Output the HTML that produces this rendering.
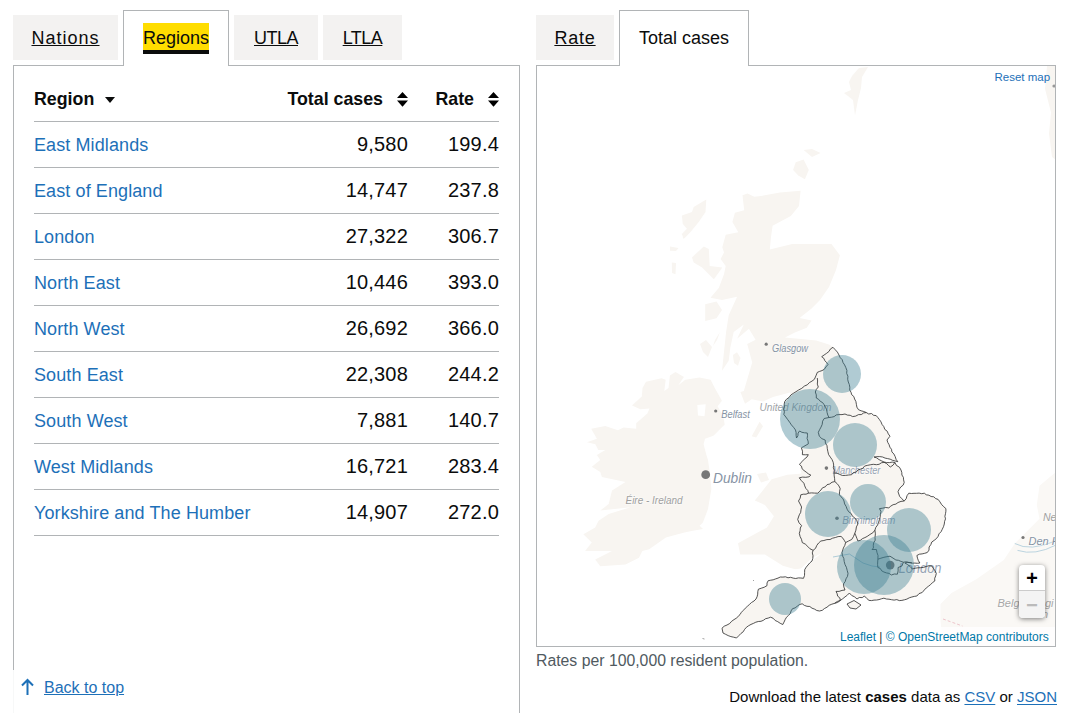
<!DOCTYPE html>
<html><head><meta charset="utf-8">
<style>
*{box-sizing:border-box;margin:0;padding:0}
html,body{width:1068px;height:713px;overflow:hidden;background:#fff;font-family:"Liberation Sans",sans-serif;color:#0b0c0c;position:relative}
.abs{position:absolute}
.tab{position:absolute;top:15px;height:45px;background:#f3f2f1;font-size:18px;line-height:25px;padding-top:11px;text-align:center}
.tab a{color:#0b0c0c;text-decoration:underline;text-underline-offset:1px;text-decoration-thickness:1px}
.tabsel{position:absolute;top:10px;height:56px;background:#fff;border:1px solid #b1b4b6;border-bottom:0;font-size:18px;line-height:25px;padding-top:14px;text-align:center;z-index:2}
.sb{display:inline-block;width:11px;height:15px;margin-left:14px;vertical-align:-2px}
.panel{position:absolute;border:1px solid #b1b4b6;background:#fff}
.hl{display:inline-block;height:25px;padding-top:1px;vertical-align:top;background:#ffdd00;box-shadow:0 -2px #ffdd00,0 4px #0b0c0c;text-decoration:none;color:#0b0c0c}
table{border-collapse:collapse;position:absolute;left:34px;top:76px;width:465px}
th,td{height:46px;border-bottom:1px solid #b1b4b6;padding:0;vertical-align:top}
th{white-space:nowrap;font-weight:bold;font-size:17.8px;line-height:25px;padding-top:11px;text-align:left;height:45px}
td{font-size:18px;line-height:25px;padding-top:11px}
td.n{text-align:right;font-size:20px;letter-spacing:0.2px;padding-top:10px}
td a{color:#1d70b8;text-decoration:none;letter-spacing:0.1px}
</style></head><body>

<!-- LEFT TABS -->
<div class="tab" style="left:13px;width:105px"><a style="letter-spacing:1px">Nations</a></div>
<div class="tabsel" style="left:123px;width:106px"><span class="hl">Regions</span></div>
<div class="tab" style="left:234px;width:84px"><a style="letter-spacing:-0.5px">UTLA</a></div>
<div class="tab" style="left:323px;width:79px"><a style="letter-spacing:-0.5px">LTLA</a></div>
<div class="panel" style="left:13px;top:65px;width:507px;height:660px"></div>

<table>
<tr><th style="width:254px">Region <span style="display:inline-block;margin-left:6px;width:0;height:0;border-left:5px solid transparent;border-right:5px solid transparent;border-top:6px solid #0b0c0c;vertical-align:2px"></span></th>
<th style="text-align:right;width:140px;padding-right:20px">Total cases<svg class="sb" viewBox="0 0 11 15"><path d="M0 6L5.5 0L11 6ZM0 8.5L11 8.5L5.5 14.8Z"/></svg></th>
<th style="text-align:right;width:71px">Rate<svg class="sb" viewBox="0 0 11 15"><path d="M0 6L5.5 0L11 6ZM0 8.5L11 8.5L5.5 14.8Z"/></svg></th></tr>
<tr><td><a>East Midlands</a></td><td class="n" style="padding-right:20px">9,580</td><td class="n">199.4</td></tr>
<tr><td><a>East of England</a></td><td class="n" style="padding-right:20px">14,747</td><td class="n">237.8</td></tr>
<tr><td><a>London</a></td><td class="n" style="padding-right:20px">27,322</td><td class="n">306.7</td></tr>
<tr><td><a>North East</a></td><td class="n" style="padding-right:20px">10,446</td><td class="n">393.0</td></tr>
<tr><td><a>North West</a></td><td class="n" style="padding-right:20px">26,692</td><td class="n">366.0</td></tr>
<tr><td><a>South East</a></td><td class="n" style="padding-right:20px">22,308</td><td class="n">244.2</td></tr>
<tr><td><a>South West</a></td><td class="n" style="padding-right:20px">7,881</td><td class="n">140.7</td></tr>
<tr><td><a>West Midlands</a></td><td class="n" style="padding-right:20px">16,721</td><td class="n">283.4</td></tr>
<tr><td><a>Yorkshire and The Humber</a></td><td class="n" style="padding-right:20px">14,907</td><td class="n">272.0</td></tr>
</table>

<!-- back to top -->
<div class="abs" style="left:0;top:670px;width:200px;height:43px;background:rgba(255,255,255,0.9)"></div>
<svg class="abs" style="left:20px;top:678px" width="15" height="18" viewBox="0 0 15 18"><path d="M7.5 17V2M2 7.5L7.5 2L13 7.5" fill="none" stroke="#1d70b8" stroke-width="2"/></svg>
<div class="abs" style="left:44px;top:678px;font-size:16px;line-height:20px"><a style="color:#1d70b8;text-decoration:underline;text-underline-offset:1px">Back to top</a></div>

<!-- RIGHT TABS -->
<div class="tab" style="left:536px;width:78px"><a style="letter-spacing:0.8px">Rate</a></div>
<div class="tabsel" style="left:619px;width:130px"><span style="position:relative;top:1px">Total cases</span></div>
<div class="panel" style="left:536px;top:65px;width:520px;height:582px;overflow:hidden" id="map">
</div>
<svg class="abs" style="left:537px;top:66px" width="518" height="580" viewBox="537 66 518 580">
<g fill="#f8f5f1">
<path d="M742.5 195.2 L747.5 193.5 L754.3 196.8 L761.0 196.0 L780.0 192.6 L800.6 190.7 L799.0 206.0 L790.8 216.0 L772.6 225.7 L771.0 237.0 L769.8 249.6 L792.2 244.0 L831.5 244.0 L839.9 255.2 L836.0 270.0 L829.0 287.0 L820.0 300.0 L811.6 308.6 L799.6 318.0 L811.6 320.4 L806.8 327.8 L794.9 332.6 L785.0 337.4 L801.0 338.9 L816.2 340.6 L829.6 344.8 L833.0 347.3 L839.0 355.0 L845.8 367.5 L847.7 379.3 L849.7 390.0 L854.6 399.0 L858.5 409.7 L866.4 412.6 L876.2 415.6 L882.0 424.4 L890.0 436.2 L887.0 440.0 L891.9 451.9 L897.8 461.7 L882.6 457.0 L874.0 457.0 L884.0 462.0 L894.9 462.5 L901.0 470.0 L904.2 482.4 L898.0 491.7 L899.6 496.3 L904.2 501.0 L908.8 493.2 L924.3 493.2 L938.1 499.4 L945.9 508.6 L944.3 524.0 L938.1 536.4 L931.8 542.0 L927.3 552.5 L916.9 555.5 L919.9 563.0 L904.9 563.0 L912.4 569.0 L931.8 566.0 L936.3 573.4 L934.8 581.0 L924.3 590.0 L916.9 596.0 L901.9 600.4 L883.9 598.2 L869.0 600.4 L864.4 596.0 L857.0 599.0 L849.4 593.0 L840.4 600.4 L834.5 603.4 L819.5 611.0 L802.2 603.8 L792.5 608.7 L782.8 624.5 L770.6 617.2 L748.7 625.7 L739.0 635.5 L736.5 638.0 L723.0 633.0 L722.0 628.2 L734.0 619.6 L741.4 612.3 L756.0 599.0 L758.4 589.2 L767.0 585.6 L768.2 580.7 L780.3 577.0 L803.5 578.3 L804.7 569.7 L812.0 561.0 L798.5 570.2 L782.8 565.7 L764.9 554.5 L740.2 554.5 L738.0 543.2 L767.0 527.5 L773.9 516.3 L764.9 505.0 L754.8 500.6 L771.6 479.3 L787.3 474.8 L799.7 473.7 L801.4 473.3 L799.5 464.5 L808.3 454.7 L802.4 454.7 L801.4 447.8 L808.3 443.9 L807.3 433.0 L799.5 431.0 L796.5 438.0 L795.5 430.0 L789.6 422.2 L783.8 414.4 L784.7 401.6 L790.8 395.0 L790.0 392.5 L773.0 397.0 L763.0 401.5 L751.7 399.2 L745.0 403.7 L740.4 392.0 L743.8 391.0 L752.2 362.4 L747.2 343.9 L755.6 339.7 L748.9 328.7 L737.1 338.8 L743.8 324.5 L733.7 332.1 L730.4 347.2 L728.7 360.7 L722.0 370.8 L726.1 332.1 L728.7 315.3 L737.1 296.7 L722.0 300.0 L710.5 297.8 L718.9 287.7 L724.0 274.3 L725.7 265.9 L720.6 259.1 L724.0 252.4 L722.3 247.3 L725.7 234.7 L738.3 232.2 L732.4 222.1 L734.9 212.8 L744.2 210.3Z"/>
<path d="M591.2 428.8 L605.3 426.0 L617.9 430.2 L623.5 427.4 L636.2 428.8 L636.2 423.2 L647.4 413.4 L649.5 408.5 L640.4 409.2 L632.0 405.6 L641.8 396.5 L642.5 388.1 L646.0 381.8 L661.5 378.3 L665.7 379.7 L664.3 390.9 L668.5 388.1 L669.9 375.4 L675.5 371.9 L683.9 376.9 L678.3 385.3 L685.3 379.7 L699.4 377.6 L710.6 379.7 L714.8 388.1 L721.9 400.7 L717.6 406.3 L723.3 416.2 L724.7 424.6 L713.4 435.8 L705.0 438.7 L703.6 444.3 L706.4 455.0 L708.0 460.1 L709.7 471.9 L711.4 488.7 L708.0 508.9 L702.9 522.4 L699.6 525.8 L703.0 529.1 L692.8 530.8 L684.4 532.5 L665.9 537.5 L649.1 549.3 L642.3 551.0 L639.0 557.7 L625.5 564.5 L600.3 566.2 L595.2 559.4 L612.0 551.0 L585.1 551.0 L591.8 542.6 L583.4 534.2 L595.2 527.4 L598.6 520.7 L608.7 514.0 L630.6 507.2 L600.3 510.6 L608.7 503.9 L612.0 490.4 L625.5 482.0 L601.9 476.9 L600.3 471.9 L591.8 466.8 L600.3 460.1 L596.9 455.0 L605.3 449.9 L598.3 449.9 L595.4 444.3 L587.0 442.2 L596.9 438.7Z"/>
<path d="M706.3 199.4 L705.5 212.0 L698.7 222.1 L690.3 232.2 L683.6 238.9 L681.9 233.9 L686.9 228.8 L682.7 223.8 L681.9 215.4 L692.0 212.0 L693.7 206.9Z"/>
<path d="M670.0 246.5 L678.5 248.0 L676.0 251.0 L670.0 250.7Z"/>
<path d="M671.8 262.5 L676.0 263.0 L675.5 274.3 L672.0 273.0Z"/>
<path d="M692.0 257.4 L703.8 246.5 L708.8 249.0 L709.7 265.9 L722.3 267.5 L713.9 279.3 L702.1 267.5 L693.7 262.5Z"/>
<path d="M705.2 304.3 L716.5 301.5 L722.0 310.0 L716.5 318.3 L705.2 321.0Z"/>
<path d="M720.0 332.0 L717.0 340.0 L713.0 346.0 L715.0 340.0Z"/>
<path d="M700.0 344.0 L706.0 340.0 L712.0 347.0 L708.0 357.0 L703.0 352.0Z"/>
<path d="M732.9 355.0 L737.0 352.3 L740.5 358.0 L738.0 365.8 L734.0 363.0Z"/>
<path d="M795.7 162.3 L803.6 159.6 L808.8 170.0 L804.9 179.3 L798.3 175.4 L793.1 170.0Z"/>
<path d="M803.6 150.0 L812.0 149.0 L820.6 153.0 L812.0 157.0Z"/>
<path d="M859.0 68.0 L868.0 67.0 L862.0 77.0 L861.0 88.0 L858.0 100.0 L855.0 115.6 L853.0 100.0 L848.0 96.0 L844.0 93.0 L851.0 90.0 L849.0 82.0 L852.0 76.0Z"/>
<path d="M751.7 436.3 L759.6 421.7 L763.0 426.2 L756.2 437.4Z"/>
<path d="M757.0 474.0 L766.0 472.5 L769.0 480.0 L761.0 482.6Z"/>
<path d="M846.4 604.2 L854.0 601.2 L861.4 604.2 L855.4 609.4Z"/>
<path d="M1047.0 66.0 L1056.0 66.0 L1056.0 160.0 L1052.0 157.0 L1049.0 133.4 L1051.0 112.4 L1045.0 88.8Z"/>
<path d="M1056.0 472.0 L1039.5 485.8 L1036.8 505.0 L1039.5 518.8 L1028.5 529.8 L1014.8 543.5 L1003.8 560.0 L976.3 579.3 L951.5 593.0 L940.5 604.0 L940.5 620.5 L943.0 646.0 L1056.0 646.0Z" fill="#faf8f5"/>
</g>
<path d="M697.3 405 L705.7 404.2 L704.5 416.2 L698 415.5Z" fill="#fff"/>
<path d="M822 553 L813 560 L805 568.5 L792 575 L770 578 L769 572 L786 570.5 L801 568.5 L812 558Z" fill="#fff"/>
<path d="M1014.8 543.5 Q1030 552 1056 540.8 M1017.5 550.4 Q1035 556 1056 545" fill="none" stroke="#b3cfdc" stroke-width="0.9"/>
<path d="M943 619 L962.5 626" stroke="#e8b8c0" stroke-width="0.8" stroke-dasharray="3 2"/>
<circle cx="1054" cy="86" r="1.6" fill="#999"/>
<g fill="#777">
<circle cx="766.2" cy="344.2" r="1.6"/><circle cx="715.7" cy="411" r="1.6"/><circle cx="826.4" cy="468.1" r="1.8"/><circle cx="837" cy="518.3" r="1.8"/><circle cx="1023" cy="537.5" r="1.6"/>
<circle cx="705.7" cy="474.7" r="4.4"/><circle cx="890.2" cy="565.1" r="4.3"/>
</g>
<g font-family="Liberation Sans" font-style="italic" fill="#8593a4" stroke="#fff" stroke-width="1.5" paint-order="stroke" stroke-opacity="0.5">
<text x="772" y="351.5" font-size="10.5" textLength="36" lengthAdjust="spacingAndGlyphs">Glasgow</text>
<text x="721.3" y="417.6" font-size="10.5" textLength="28.5" lengthAdjust="spacingAndGlyphs">Belfast</text>
<text x="713" y="483" font-size="15" textLength="39" lengthAdjust="spacingAndGlyphs" fill="#8794a5">Dublin</text>
<text x="625.5" y="504" font-size="10.5" textLength="57" lengthAdjust="spacingAndGlyphs" fill="#a0a0a0">Éire - Ireland</text>
<text x="759.5" y="411" font-size="11" textLength="72" lengthAdjust="spacingAndGlyphs" fill="#a0a4a8">United Kingdom</text>
<text x="832.4" y="474.1" font-size="10.5" textLength="48" lengthAdjust="spacingAndGlyphs" fill="#98a4b4">Manchester</text>
<text x="842.2" y="524.3" font-size="10.5" textLength="53" lengthAdjust="spacingAndGlyphs" fill="#98a4b4">Birmingham</text>
<text x="898.5" y="573.4" font-size="14.5" textLength="43" lengthAdjust="spacingAndGlyphs" fill="#98a4b4">London</text>
<text x="1043" y="521" font-size="10.5" fill="#a0a0a0">Ne</text>
<text x="1028.5" y="544.5" font-size="11">Den Ha</text>
<text x="997.5" y="607" font-size="11" fill="#a8a8a8">Belgi</text><text x="1045" y="607" font-size="11" fill="#a8a8a8">gi</text><text x="1036" y="618" font-size="11" fill="#a8a8a8">en</text>
</g>
<path d="M833 557 L849.4 554 L863 563 L872 566 L880 567" fill="none" stroke="#9cc2d0" stroke-width="0.8"/>
<g fill="none" stroke="#2a2a2a" stroke-width="0.8" stroke-linejoin="round">
<path d="M833.0 347.3 L835.2 349.7 L837.4 352.1 L839.0 355.0 L840.2 357.6 L842.2 359.7 L843.0 362.5 L844.6 364.9 L845.8 367.5 L846.9 370.4 L846.7 373.4 L847.9 376.2 L847.7 379.3 L848.3 382.0 L849.3 384.5 L849.8 387.2 L849.7 390.0 L851.0 392.2 L851.7 394.7 L853.8 396.5 L854.6 399.0 L855.9 401.5 L856.4 404.4 L856.9 407.2 L858.5 409.7 L861.1 410.8 L863.8 411.5 L866.4 412.6 L868.7 414.0 L871.5 413.5 L873.6 415.3 L876.2 415.6 L877.9 417.6 L879.5 419.7 L881.0 421.9 L882.0 424.4 L883.8 426.6 L884.8 429.4 L887.2 431.2 L888.3 433.9 L890.0 436.2 L887.0 440.0 L887.8 442.5 L889.1 444.7 L889.9 447.2 L891.5 449.3 L891.9 451.9 L893.9 454.0 L895.2 456.6 L896.1 459.4 L897.8 461.7 L895.2 461.0 L892.7 460.4 L890.2 459.2 L887.6 458.6 L885.1 458.1 L882.6 457.0 L879.7 456.6 L876.9 456.7 L874.0 457.0 L876.7 457.9 L879.0 459.6 L881.5 460.8 L884.0 462.0 L886.7 462.6 L889.4 462.6 L892.2 462.1 L894.9 462.5 L896.4 465.4 L899.4 467.2 L901.0 470.0 L901.8 472.5 L901.9 475.0 L903.4 477.3 L903.6 479.9 L904.2 482.4 L903.2 485.1 L900.9 486.9 L899.2 489.2 L898.0 491.7 L899.6 496.3 L901.8 498.7 L904.2 501.0 L906.2 498.7 L907.0 495.7 L908.8 493.2 L911.4 493.5 L914.0 493.3 L916.5 493.3 L919.1 493.1 L921.7 493.7 L924.3 493.2 L926.3 494.8 L928.9 495.2 L931.1 496.5 L933.8 496.8 L935.7 498.6 L938.1 499.4 L939.9 501.8 L941.5 504.4 L943.6 506.6 L945.9 508.6 L945.9 511.2 L945.5 513.7 L944.9 516.3 L945.5 518.9 L944.6 521.4 L944.3 524.0 L943.5 526.7 L942.3 529.2 L941.1 531.7 L939.0 533.8 L938.1 536.4 L936.3 538.7 L934.1 540.4 L931.8 542.0 L930.8 544.7 L929.1 547.0 L929.0 550.1 L927.3 552.5 L924.7 553.3 L922.1 553.9 L919.4 554.2 L916.9 555.5 L917.5 558.2 L918.4 560.7 L919.9 563.0 L917.4 563.3 L914.9 563.1 L912.4 563.2 L909.9 562.5 L907.4 562.4 L904.9 563.0 L907.7 564.6 L910.2 566.6 L912.4 569.0 L915.1 568.2 L917.9 567.8 L920.7 567.7 L923.5 567.4 L926.2 566.5 L928.9 565.7 L931.8 566.0 L933.4 568.4 L935.0 570.8 L936.3 573.4 L935.7 575.9 L934.7 578.3 L934.8 581.0 L932.5 582.6 L930.6 584.6 L928.4 586.3 L926.2 588.0 L924.3 590.0 L922.2 592.5 L919.0 593.6 L916.9 596.0 L914.3 596.4 L911.8 597.0 L909.3 597.8 L906.9 599.1 L904.4 599.8 L901.9 600.4 L899.3 600.6 L896.8 599.6 L894.1 600.1 L891.5 599.7 L889.0 599.2 L886.4 599.0 L883.9 598.2 L881.4 598.8 L879.0 599.6 L876.6 600.0 L874.0 600.1 L871.6 600.6 L869.0 600.4 L866.6 598.3 L864.4 596.0 L862.2 597.6 L859.3 597.5 L857.0 599.0 L854.6 596.9 L851.6 595.4 L849.4 593.0 L847.4 595.1 L845.0 596.9 L842.8 598.7 L840.4 600.4 L837.7 602.4 L834.5 603.4 L831.8 604.2 L829.2 605.3 L827.0 607.2 L824.5 608.5 L822.3 610.3 L819.5 611.0 L816.8 610.5 L814.5 609.1 L812.0 608.2 L809.8 606.5 L807.0 606.3 L804.4 605.4 L802.2 603.8 L799.5 604.5 L797.3 606.2 L795.1 607.9 L792.5 608.7 L791.1 610.9 L790.3 613.6 L788.3 615.5 L786.4 617.4 L785.1 619.7 L784.0 622.1 L782.8 624.5 L780.2 623.3 L777.8 621.7 L775.2 620.5 L773.2 618.3 L770.6 617.2 L768.2 618.1 L765.6 618.7 L763.4 620.3 L761.0 621.3 L758.3 621.5 L755.8 622.2 L753.4 623.4 L751.0 624.4 L748.7 625.7 L746.4 627.3 L744.6 629.4 L743.2 631.8 L740.9 633.5 L739.0 635.5 L736.5 638.0 L733.7 637.2 L730.9 636.6 L728.2 635.6 L725.6 634.3 L723.0 633.0 L722.0 628.2 L724.2 626.2 L727.0 625.0 L729.6 623.6 L731.6 621.3 L734.0 619.6 L736.3 618.2 L738.2 616.4 L740.0 614.6 L741.4 612.3 L743.4 610.3 L745.3 608.2 L747.4 606.3 L749.5 604.4 L751.5 602.5 L754.0 601.0 L756.0 599.0 L757.1 596.7 L757.7 594.2 L757.8 591.6 L758.4 589.2 L761.3 588.2 L764.3 587.2 L767.0 585.6 L767.0 583.0 L768.2 580.7 L770.7 580.2 L773.2 579.8 L775.6 578.9 L778.0 578.1 L780.3 577.0 L782.9 577.1 L785.5 576.8 L788.0 577.8 L790.6 577.3 L793.2 578.1 L795.7 578.5 L798.4 577.9 L800.9 578.0 L803.5 578.3 L804.5 575.5 L804.6 572.6 L804.7 569.7 L806.2 567.2 L808.0 565.0 L809.8 562.9 L812.0 561.0 L812.8 558.4 L813.0 555.7 L812.3 552.9 L813.1 550.3 L810.0 548.8 L807.7 546.4 L805.3 544.1 L802.3 542.6 L801.5 539.4 L800.1 536.5 L799.3 533.3 L800.1 530.8 L800.3 528.0 L801.6 525.6 L799.1 522.9 L797.7 519.4 L799.3 514.8 L800.7 512.4 L801.0 509.7 L801.6 507.0 L800.1 504.0 L798.5 501.0 L800.2 498.1 L800.8 494.8 L803.3 494.2 L806.0 494.2 L808.5 493.2 L807.8 490.5 L805.8 488.4 L804.7 485.8 L803.9 483.2 L801.4 480.7 L799.3 477.8 L802.5 477.1 L805.8 477.3 L809.0 476.8 L810.8 475.1 L808.3 473.8 L806.2 472.1 L804.0 470.5 L802.1 468.8 L801.5 466.2 L799.5 464.5 L801.1 462.4 L803.0 460.5 L804.9 458.7 L807.0 457.0 L808.3 454.7 L805.3 454.8 L802.4 454.7 L802.5 451.2 L801.4 447.8 L803.7 446.5 L806.0 445.2 L808.3 443.9 L808.1 441.2 L807.1 438.5 L807.5 435.7 L807.3 433.0 L804.6 432.8 L801.9 432.3 L799.5 431.0 L798.1 433.2 L797.9 435.8 L796.5 438.0 L796.1 435.3 L796.1 432.6 L795.5 430.0 L793.6 427.4 L791.4 424.9 L789.6 422.2 L787.7 419.6 L785.8 417.0 L783.8 414.4 L784.4 411.9 L783.6 409.2 L784.4 406.7 L784.2 404.1 L784.7 401.6 L786.5 399.2 L789.0 397.5 L790.8 395.0 L793.4 393.3 L796.0 391.7 L798.6 390.0 L801.8 388.3 L804.5 386.0 L807.3 384.8 L809.4 382.6 L812.0 381.1 L814.4 379.3 L815.9 375.9 L817.3 372.4 L819.6 371.4 L822.0 370.6 L824.2 369.4 L826.0 366.9 L828.0 364.5 L826.5 362.5 L824.8 360.6 L823.8 358.3 L821.7 356.7 L824.1 355.0 L826.6 353.3 L828.9 351.5 L830.5 348.9 L833.0 347.3Z"/>
<path d="M817.3 378.0 L817.6 381.0 L817.3 384.1 L818.3 387.0 L816.4 389.3 L815.3 392.0 L816.3 394.9 L816.3 398.0 L818.6 399.3 L820.3 401.3 L822.6 402.6 L824.2 404.8 L825.5 407.3 L826.7 409.8 L827.1 412.6 L827.8 415.1 L829.0 417.5"/>
<path d="M829.0 417.5 L831.6 417.2 L834.1 416.6 L836.3 414.9 L838.9 414.6 L842.0 414.6 L845.0 414.0 L847.5 415.1 L850.2 415.3 L852.6 416.6 L855.7 416.1 L858.5 414.6 L861.3 414.6 L863.7 412.9 L866.4 412.6"/>
<path d="M829.0 417.5 L824.2 418.5 L822.6 421.2 L822.2 424.4 L821.0 427.1 L819.6 429.7 L818.3 432.3 L819.3 436.2 L821.9 438.7 L825.2 440.0 L825.4 443.0 L827.0 445.7 L827.3 448.7 L827.9 451.7 L828.6 454.6 L830.3 457.1 L832.0 459.5 L833.2 462.3 L833.7 465.0 L833.3 467.7 L834.5 470.3 L834.0 473.0 L834.2 475.9 L834.6 478.7 L834.8 481.6"/>
<path d="M834.0 473.0 L837.0 473.2 L839.7 474.4 L842.5 475.5 L845.6 475.4 L848.6 475.0 L851.7 474.7 L853.4 472.6 L856.2 472.1 L857.9 470.0 L860.4 469.2 L862.8 468.3 L864.6 466.1 L867.2 465.4 L870.2 464.8 L873.3 464.3 L876.4 464.7 L879.1 464.3 L881.4 462.8 L884.1 462.3 L886.5 463.5 L888.3 465.3 L890.3 467.0 L893.0 465.2 L894.9 462.5"/>
<path d="M834.8 481.6 L832.0 482.2 L829.7 484.0 L827.0 484.7 L825.3 486.8 L822.5 487.8 L820.9 490.0 L817.8 493.2 L814.7 493.1 L811.6 492.9 L808.5 493.2"/>
<path d="M834.8 481.6 L837.1 483.6 L838.9 485.9 L840.2 488.6 L839.5 491.7 L839.4 494.8 L841.0 496.8 L842.9 498.6 L844.0 501.0 L844.6 503.9 L846.1 506.4 L847.1 509.2 L848.6 511.7 L851.1 513.4 L852.4 516.2 L854.8 517.9 L856.9 520.7 L857.9 524.0 L856.4 526.9 L855.9 530.2 L854.8 533.3 L853.5 536.5 L851.7 539.5 L848.6 541.0 L845.6 542.6"/>
<path d="M813.1 550.3 L815.5 548.4 L816.8 545.4 L818.6 543.0 L820.9 541.0 L823.9 540.5 L826.9 539.6 L830.0 539.5 L832.6 538.2 L835.4 537.5 L838.1 536.6 L841.0 536.4 L842.9 538.2 L844.3 540.4 L845.6 542.6"/>
<path d="M845.6 542.6 L844.8 545.4 L843.4 548.0 L842.0 552.5 L842.4 555.6 L843.8 558.4 L844.2 561.5 L845.0 564.5 L846.4 567.3 L847.2 570.4 L848.0 573.4 L847.5 576.3 L846.0 578.8 L845.2 581.6 L843.4 584.0 L843.9 587.1 L845.0 590.0 L842.0 590.4 L839.1 591.4 L836.0 591.4 L837.1 593.6 L837.7 596.2 L839.8 597.9 L840.4 600.4 L837.2 601.5 L834.5 603.4"/>
<path d="M854.8 533.3 L855.9 535.8 L856.9 538.4 L857.9 541.0 L860.4 540.3 L862.5 538.6 L864.9 537.6 L867.2 536.4 L869.9 534.5 L872.8 532.8 L874.9 530.2 L875.8 527.4 L877.6 525.0 L878.6 522.2 L879.5 519.4 L880.2 516.9 L880.4 514.2 L881.0 511.7 L879.5 508.6 L882.6 508.2 L885.7 507.5 L888.8 507.9 L890.8 506.1 L893.1 504.7 L895.9 504.1 L898.0 502.5 L901.0 501.4 L904.2 501.0"/>
<path d="M874.9 530.2 L875.4 533.8 L875.0 537.5 L875.2 540.2 L873.7 542.7 L873.3 545.3 L873.4 548.0 L872.0 549.5 L876.4 549.5 L877.0 552.6 L878.0 555.5 L877.9 559.2"/>
<path d="M877.9 559.2 L880.9 558.2 L883.9 557.3 L886.9 556.7 L890.0 556.2 L893.0 558.1 L895.9 560.0 L898.5 560.3 L900.9 561.4 L903.4 562.2 L901.9 566.0 L898.1 567.5 L898.1 570.9 L897.4 574.2 L894.3 574.0 L891.4 575.0 L889.1 573.4 L886.4 572.9 L883.9 572.0 L881.7 570.8 L880.3 568.5 L877.9 567.5 L877.6 564.7 L877.7 562.0 L877.9 559.2"/>
<path d="M903.4 562.2 L906.3 561.8 L909.1 562.6 L912.0 563.0"/>
<path d="M847 604 L854 600.5 L861 605 L856 609 L850 608Z" fill="#f8f5f1"/>
<path d="M702.5 638.5 l2 0.5 M753 580 l1 1" stroke="#888" stroke-width="0.8"/>
</g>
<g fill="rgb(58,124,146)" fill-opacity="0.4">
<circle cx="842" cy="374" r="19"/>
<circle cx="810" cy="419" r="30"/>
<circle cx="855" cy="445" r="22"/>
<circle cx="828" cy="514" r="23"/>
<circle cx="868" cy="502" r="18"/>
<circle cx="909" cy="530" r="22"/>
<circle cx="864" cy="567" r="27"/>
<circle cx="884" cy="565" r="30"/>
<circle cx="785" cy="599" r="16"/>
</g>
</svg>
<div class="abs" style="left:994.5px;top:70px;font-size:11.5px;line-height:14px;color:#1d70b8">Reset map</div>
<div class="abs" style="left:1019px;top:565px;width:26px;height:53px;border-radius:4px;box-shadow:0 1px 5px rgba(0,0,0,0.5);background:#fff;overflow:hidden">
 <div style="height:26px;border-bottom:1px solid #ccc;font:bold 20px/26px 'Liberation Mono',monospace;text-align:center;color:#000;padding-top:2px">+</div>
 <div style="height:27px;background:#f4f4f4;font:bold 20px/26px 'Liberation Mono',monospace;text-align:center;color:#bbb;padding-top:3px">&minus;</div>
</div>
<div class="abs" style="left:836px;top:627px;width:219px;height:19px;background:rgba(255,255,255,0.75);font-size:12px;line-height:20px;color:#333;padding-left:4px"><span style="color:#0078a8">Leaflet</span> | <span style="color:#0078a8">&copy; OpenStreetMap contributors</span></div>

<div class="abs" style="left:536px;top:651px;font-size:15.8px;line-height:20px;color:#505a5f">Rates per 100,000 resident population.</div>
<div class="abs" style="right:11px;top:687px;font-size:15px;line-height:20px;color:#0b0c0c">Download the latest <b>cases</b> data as <a style="color:#1d70b8;text-decoration:underline;text-underline-offset:2px">CSV</a> or <a style="color:#1d70b8;text-decoration:underline;text-underline-offset:2px">JSON</a></div>

</body></html>
